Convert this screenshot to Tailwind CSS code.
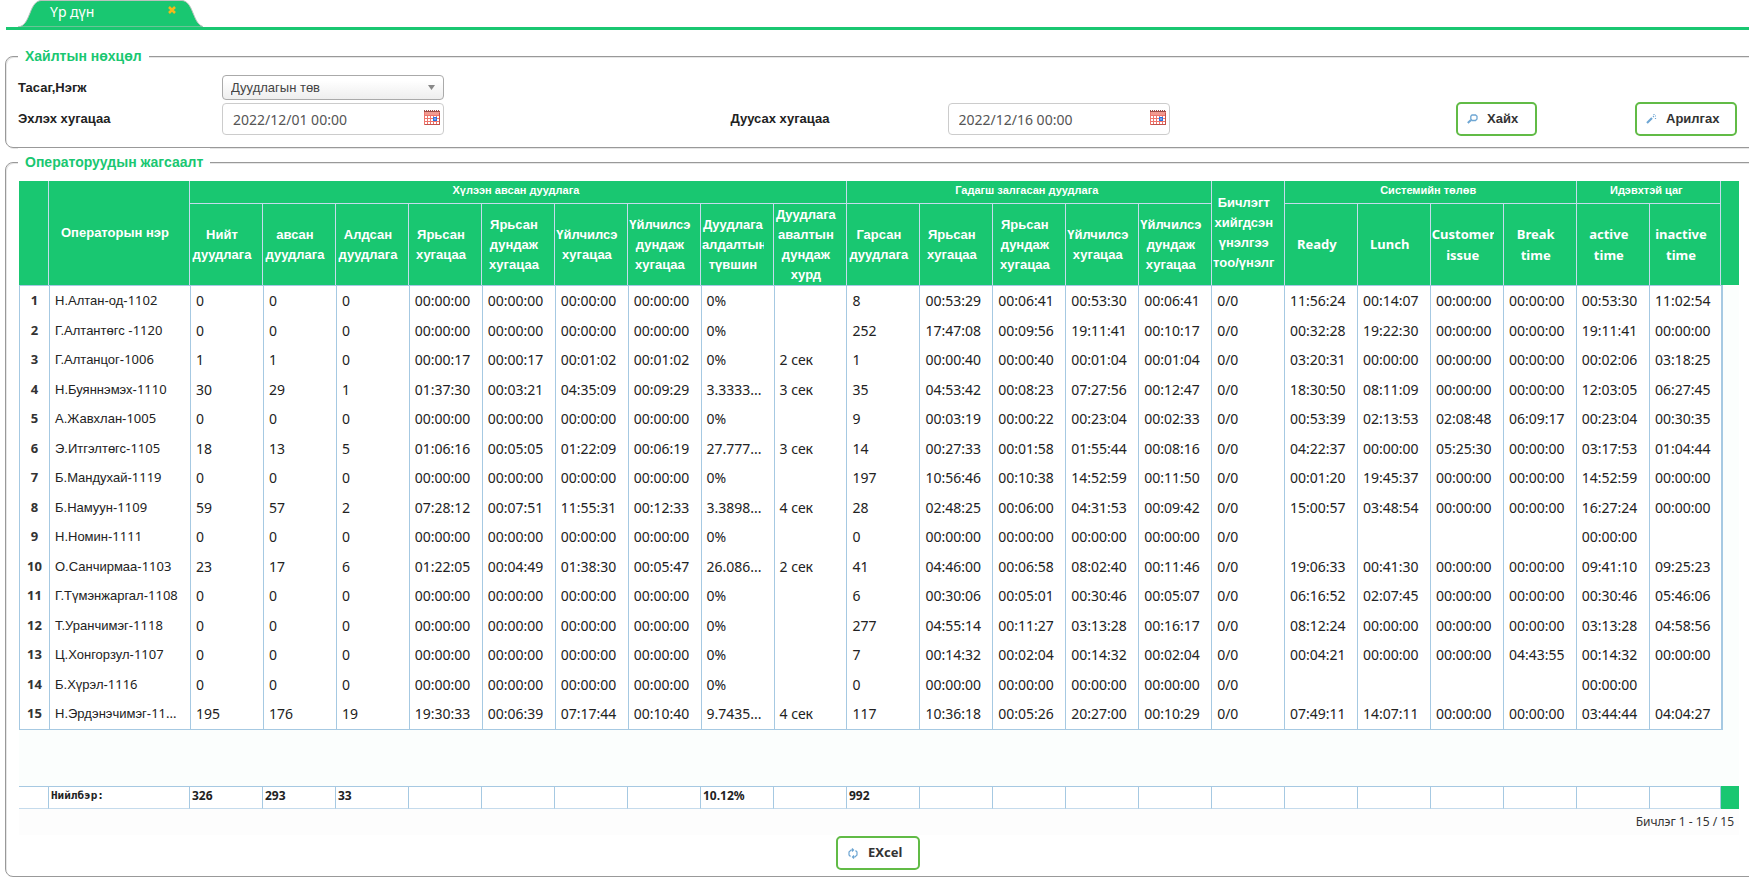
<!DOCTYPE html>
<html lang="mn">
<head>
<meta charset="utf-8">
<title>Үр дүн</title>
<script src="https://cdn.jsdelivr.net/npm/@tailwindcss/browser@4"></script>
</head>
<body class="overflow-x-hidden bg-white font-['Liberation_Sans',sans-serif] text-[13px] text-[#222]">
<svg class="hidden" aria-hidden="true">
  <symbol id="calendar" viewBox="0 0 16 15">
    <rect x="0" y="2" width="16" height="13" fill="#ee756c"/>
    <path d="M15 3h1v12H1v-1h14z" fill="#c4524b"/>
    <path d="M0 0h1v1h1V0h1v1h1V0h1v1h1V0h1v1h1V0h1v1h1V0h1v1h1V0h1v1h1V0h1v1h1v1H0z" fill="#9c4a45"/>
    <rect x="1" y="2" width="14" height="3" fill="#f19a90"/>
    <path d="M1 6h2v2H1zM4 6h2v2H4zM7 6h2v2H7zM10 6h2v2h-2zM13 6h2v2h-2zM1 9h2v2H1zM4 9h2v2H4zM7 9h2v2H7zM13 9h2v2h-2zM1 12h2v2H1zM4 12h2v2H4zM7 12h2v2H7zM10 12h2v2h-2zM13 12h2v2h-2z" fill="#fff"/>
    <rect x="9.700" y="7.700" width="2.600" height="2.600" fill="#fff" stroke="#2a6fe0" stroke-width="1.400"/>
  </symbol>
</svg>

<header class="ml-[6px] h-[30px] border-b-[3px] border-[#19c771]">
  <div class="relative ml-3 flex h-[27px] w-[185px] items-start">
    <svg class="absolute inset-0 h-full w-full" viewBox="0 0 185 27" aria-hidden="true"><path d="M0 27C7 26 9 20 12 13C15 5 18 1 23 0.500H164C169 1 172 5 175 13C178 20 180 26 187 27Z" fill="#19c771" stroke="#b9c2bd" stroke-width="1"/></svg>
    <a href="#" class="relative ml-8 pt-[2px] font-['Noto_Sans',sans-serif] text-[14px] leading-[20px] text-white">Үр дүн</a>
    <button type="button" aria-label="Хаах" class="absolute left-[150px] top-[6px] h-2 w-2"><svg class="block" width="8" height="8" viewBox="0 0 8 8"><path d="M1 1L7 7M7 1L1 7" stroke="#f5b81a" stroke-width="2.500"/></svg></button>
  </div>
</header>

<main class="pl-[5px]">
  <fieldset class="-mr-3 mt-[11px] rounded-lg border border-[#999] pb-[11px] pl-3 pr-[23px] shadow-[inset_1px_1px_0_#e6e6e6,1px_1px_0_#e6e6e6]">
    <legend class="bg-white px-[7px] text-[14px] font-bold leading-[30px] text-[#19c771]">Хайлтын нөхцөл</legend>
    <form class="mt-1 grid grid-cols-[204px_1fr_217px_1fr_179px_102px] items-center gap-y-[2px]">
      <label for="unit" class="font-bold">Тасаг,Нэгж</label>
      <div class="relative col-span-5 w-[222px]">
        <select id="unit" class="block h-[25px] w-full appearance-none rounded-[4px] border border-[#aaa] bg-linear-to-b from-white from-20% to-[#eee] pl-2 text-[#444]"><option>Дуудлагын төв</option></select>
        <svg class="pointer-events-none absolute right-[9px] top-[10px]" width="7" height="5" viewBox="0 0 7 5"><path d="M0 0H7L3.500 5Z" fill="#888"/></svg>
      </div>
      <label for="from" class="font-bold">Эхлэх хугацаа</label>
      <div class="relative w-[222px]">
        <input id="from" value="2022/12/01 00:00" class="block h-8 w-full rounded-[4px] border border-[#ccc] pl-[10px] font-['Noto_Sans',sans-serif] text-[14px] text-[#555]">
        <button type="button" aria-label="Огноо" class="absolute right-1 top-[7px]"><svg class="block" width="16" height="15"><use href="#calendar"/></svg></button>
      </div>
      <label for="to" class="font-bold">Дуусах хугацаа</label>
      <div class="relative w-[222px]">
        <input id="to" value="2022/12/16 00:00" class="block h-8 w-full rounded-[4px] border border-[#ccc] pl-[10px] font-['Noto_Sans',sans-serif] text-[14px] text-[#555]">
        <button type="button" aria-label="Огноо" class="absolute right-1 top-[7px]"><svg class="block" width="16" height="15"><use href="#calendar"/></svg></button>
      </div>
      <button type="button" class="flex h-[34px] w-[81px] items-center gap-[9px] rounded-[5px] border-2 border-[#61bb46] pl-[9px] text-[13px] font-bold text-[#333]">
        <svg width="11" height="10" viewBox="0 0 11 10" fill="none" stroke="#6ea6d3"><path d="M5 1h3.500l1.500 1.300v2.700l-1.500 1.500H5L3.800 5V2.300z" stroke-width="1.300"/><path d="M4 6L.8 9" stroke-width="2"/></svg>Хайх</button>
      <button type="button" class="flex h-[34px] w-[102px] items-center gap-[9px] rounded-[5px] border-2 border-[#61bb46] pl-[9px] text-[13px] font-bold text-[#333]">
        <svg width="11" height="10" viewBox="0 0 11 10" fill="none" stroke="#6ea6d3"><path d="M1 9L6 4" stroke-width="2.200"/><path d="M7 3L8 2M8 0v1M10 2H9M9.500 4v1" stroke-width="1.200"/></svg>Арилгах</button>
    </form>
  </fieldset>

  <fieldset class="-mr-3 rounded-lg border border-[#999] pb-[6px] pl-[13px] pr-[21px] shadow-[inset_1px_1px_0_#e6e6e6,1px_1px_0_#e6e6e6]">
    <legend class="-ml-px bg-white px-[7px] text-[14px] font-bold leading-[28px] text-[#19c771]">Операторуудын жагсаалт</legend>
    <div class="mt-[5px] bg-[#19c771] pr-[18px]">
      <table class="w-full table-fixed border-separate border-spacing-0 text-center font-bold leading-[20px] text-white">
        <colgroup id="head-cols"></colgroup>
        <thead id="head"></thead>
      </table>
    </div>
    <div class="bg-[#fbfefd] pb-[56px] pr-[16px]">
      <table class="w-full table-fixed border-separate border-spacing-0 border-b border-l border-r-2 border-[#a6c9e2] border-t bg-white">
        <colgroup id="body-cols"></colgroup>
        <tbody id="body"></tbody>
      </table>
    </div>
    <div class="bg-[#19c771] pr-[18px]">
      <table class="w-full table-fixed border-separate border-spacing-0 bg-white">
        <colgroup id="foot-cols"></colgroup>
        <tfoot id="foot"></tfoot>
      </table>
    </div>
    <div class="flex h-[26px] items-center justify-end bg-[#fdfdfd] pr-[5px] font-['Noto_Sans','Liberation_Sans',sans-serif] text-[12px] text-[#333]">Бичлэг 1 - 15 / 15</div>
    <div class="mt-[1px] flex justify-center pr-[2px]">
      <button type="button" class="flex h-[34px] w-[84px] items-center gap-[10px] rounded-[5px] border-2 border-[#61bb46] pl-[10px] font-['Noto_Sans',sans-serif] text-[13px] font-bold text-[#333]">
        <svg width="10" height="11" viewBox="0 0 10 11" fill="none" stroke="#6ea6d3" stroke-width="1.200"><path d="M5.500 2H3L1 4v3l1.500 1.500M4 .5L5.500 2L4 3.500M4.500 9H7l2-2V4L7.500 2.500M6 7.500L4.500 9L6 10.500"/></svg>EXcel</button>
    </div>
  </fieldset>
</main>

<script>
const cols = (last) => '<col class="w-[30px]"><col class="w-[141px]">' + '<col>'.repeat(20) + `<col class="${last}">`;
document.getElementById('head-cols').innerHTML = cols('w-[71px]');
document.getElementById('body-cols').innerHTML = cols('w-[71px]');
document.getElementById('foot-cols').innerHTML = cols('w-[71px]');

const groupHead = (t, n) => `<th colspan="${n}" class="h-[23px] border-b border-r border-[#c5dbec] pb-[5px] pr-1 text-[11px] leading-[16px]">${t}</th>`;
const head = (t, rows = 1) => `<th rowspan="${rows}" class="whitespace-nowrap border-r border-[#c5dbec] p-0 pr-[9px]"><div class="overflow-hidden pl-px">${t}</div></th>`;
const latin = (t) => `<span class="font-['Noto_Sans',sans-serif] text-[13px]">${t}</span>`;
const sub = ['Нийт<br>дуудлага', 'авсан<br>дуудлага', 'Алдсан<br>дуудлага', 'Ярьсан<br>хугацаа', 'Ярьсан<br>дундаж<br>хугацаа', 'Үйлчилсэ<br>хугацаа', 'Үйлчилсэ<br>дундаж<br>хугацаа', 'Дуудлага<br>алдалтын<br>түвшин', 'Дуудлага<br>авалтын<br>дундаж<br>хурд',
  'Гарсан<br>дуудлага', 'Ярьсан<br>хугацаа', 'Ярьсан<br>дундаж<br>хугацаа', 'Үйлчилсэ<br>хугацаа', 'Үйлчилсэ<br>дундаж<br>хугацаа',
  latin('Ready'), latin('Lunch'), latin('Customer<br>issue'), latin('Break<br>time'), latin('active<br>time'), latin('inactive<br>time')];
document.getElementById('head').innerHTML =
  '<tr>' + head('', 2) + head('Операторын нэр', 2) + groupHead('Хүлээн авсан дуудлага', 9) + groupHead('Гадагш залгасан дуудлага', 5) +
  head('Бичлэгт<br>хийгдсэн<br>үнэлгээ<br>тоо/үнэлг', 2) + groupHead('Системийн төлөв', 4) + groupHead('Идэвхтэй цаг', 2) + '</tr>' +
  '<tr class="h-[81px]">' + sub.map((t) => head(t)).join('') + '</tr>';

const Z = '00:00:00';
const rows = [
  ['Н.Алтан-од-|1102', 0, 0, 0, Z, Z, Z, Z, '0%', '', 8, '00:53:29', '00:06:41', '00:53:30', '00:06:41', '0/0', '11:56:24', '00:14:07', Z, Z, '00:53:30', '11:02:54'],
  ['Г.Алтантөгс -|1120', 0, 0, 0, Z, Z, Z, Z, '0%', '', 252, '17:47:08', '00:09:56', '19:11:41', '00:10:17', '0/0', '00:32:28', '19:22:30', Z, Z, '19:11:41', Z],
  ['Г.Алтанцог-|1006', 1, 1, 0, '00:00:17', '00:00:17', '00:01:02', '00:01:02', '0%', '2 сек', 1, '00:00:40', '00:00:40', '00:01:04', '00:01:04', '0/0', '03:20:31', Z, Z, Z, '00:02:06', '03:18:25'],
  ['Н.Буяннэмэх-|1110', 30, 29, 1, '01:37:30', '00:03:21', '04:35:09', '00:09:29', '3.3333...', '3 сек', 35, '04:53:42', '00:08:23', '07:27:56', '00:12:47', '0/0', '18:30:50', '08:11:09', Z, Z, '12:03:05', '06:27:45'],
  ['А.Жавхлан-|1005', 0, 0, 0, Z, Z, Z, Z, '0%', '', 9, '00:03:19', '00:00:22', '00:23:04', '00:02:33', '0/0', '00:53:39', '02:13:53', '02:08:48', '06:09:17', '00:23:04', '00:30:35'],
  ['Э.Итгэлтөгс-|1105', 18, 13, 5, '01:06:16', '00:05:05', '01:22:09', '00:06:19', '27.777...', '3 сек', 14, '00:27:33', '00:01:58', '01:55:44', '00:08:16', '0/0', '04:22:37', Z, '05:25:30', Z, '03:17:53', '01:04:44'],
  ['Б.Мандухай-|1119', 0, 0, 0, Z, Z, Z, Z, '0%', '', 197, '10:56:46', '00:10:38', '14:52:59', '00:11:50', '0/0', '00:01:20', '19:45:37', Z, Z, '14:52:59', Z],
  ['Б.Намуун-|1109', 59, 57, 2, '07:28:12', '00:07:51', '11:55:31', '00:12:33', '3.3898...', '4 сек', 28, '02:48:25', '00:06:00', '04:31:53', '00:09:42', '0/0', '15:00:57', '03:48:54', Z, Z, '16:27:24', Z],
  ['Н.Номин-|1111', 0, 0, 0, Z, Z, Z, Z, '0%', '', 0, Z, Z, Z, Z, '0/0', '', '', '', '', Z, ''],
  ['О.Санчирмаа-|1103', 23, 17, 6, '01:22:05', '00:04:49', '01:38:30', '00:05:47', '26.086...', '2 сек', 41, '04:46:00', '00:06:58', '08:02:40', '00:11:46', '0/0', '19:06:33', '00:41:30', Z, Z, '09:41:10', '09:25:23'],
  ['Г.Түмэнжаргал-|1108', 0, 0, 0, Z, Z, Z, Z, '0%', '', 6, '00:30:06', '00:05:01', '00:30:46', '00:05:07', '0/0', '06:16:52', '02:07:45', Z, Z, '00:30:46', '05:46:06'],
  ['Т.Уранчимэг-|1118', 0, 0, 0, Z, Z, Z, Z, '0%', '', 277, '04:55:14', '00:11:27', '03:13:28', '00:16:17', '0/0', '08:12:24', Z, Z, Z, '03:13:28', '04:58:56'],
  ['Ц.Хонгорзул-|1107', 0, 0, 0, Z, Z, Z, Z, '0%', '', 7, '00:14:32', '00:02:04', '00:14:32', '00:02:04', '0/0', '00:04:21', Z, Z, '04:43:55', '00:14:32', Z],
  ['Б.Хүрэл-|1116', 0, 0, 0, Z, Z, Z, Z, '0%', '', 0, Z, Z, Z, Z, '0/0', '', '', '', '', Z, ''],
  ['Н.Эрдэнэчимэг-|11...', 195, 176, 19, '19:30:33', '00:06:39', '07:17:44', '00:10:40', '9.7435...', '4 сек', 117, '10:36:18', '00:05:26', '20:27:00', '00:10:29', '0/0', '07:49:11', '14:07:11', Z, Z, '03:44:44', '04:04:27'],
];
document.getElementById('body').innerHTML = rows.map(([name, ...cells], i) => {
  const [word, num] = name.split('|');
  return `<tr class="odd:h-[30px] even:h-[29px]">
    <th class="border-r border-[#a6c9e2] p-0 text-center font-['Noto_Sans',sans-serif] text-[13px] font-bold text-[#333]">${i + 1}</th>
    <td class="truncate border-r border-[#a6c9e2] py-0 pl-[5px] pr-2 text-[13px]">${word}<span class="font-['Noto_Sans',sans-serif]">${num}</span></td>` +
    cells.map((c) => `<td class="truncate border-r border-[#a6c9e2] py-0 pl-[5px] pr-2 font-['Noto_Sans',sans-serif] text-[14px] leading-[20px] last:border-r-0 last:pr-0">${c}</td>`).join('') + '</tr>';
}).join('');

const totals = ['', 'Нийлбэр:', 326, 293, 33, '', '', '', '', '10.12%', '', 992, '', '', '', '', '', '', '', '', '', '', ''];
document.getElementById('foot').innerHTML = '<tr>' + totals.map((t, i) =>
  `<td class="h-[23px] border-y border-r border-t-[#a6c9e2] border-r-[#a6c9e2] border-b-[#c5dbec] py-0 pb-1 pl-[2px] font-bold ${i === 1 ? "font-['DejaVu_Sans_Mono',monospace] text-[11px]" : "font-['Noto_Sans',sans-serif] text-[12px]"} leading-[16px]">${t}</td>`).join('') + '</tr>';
</script>
</body>
</html>
